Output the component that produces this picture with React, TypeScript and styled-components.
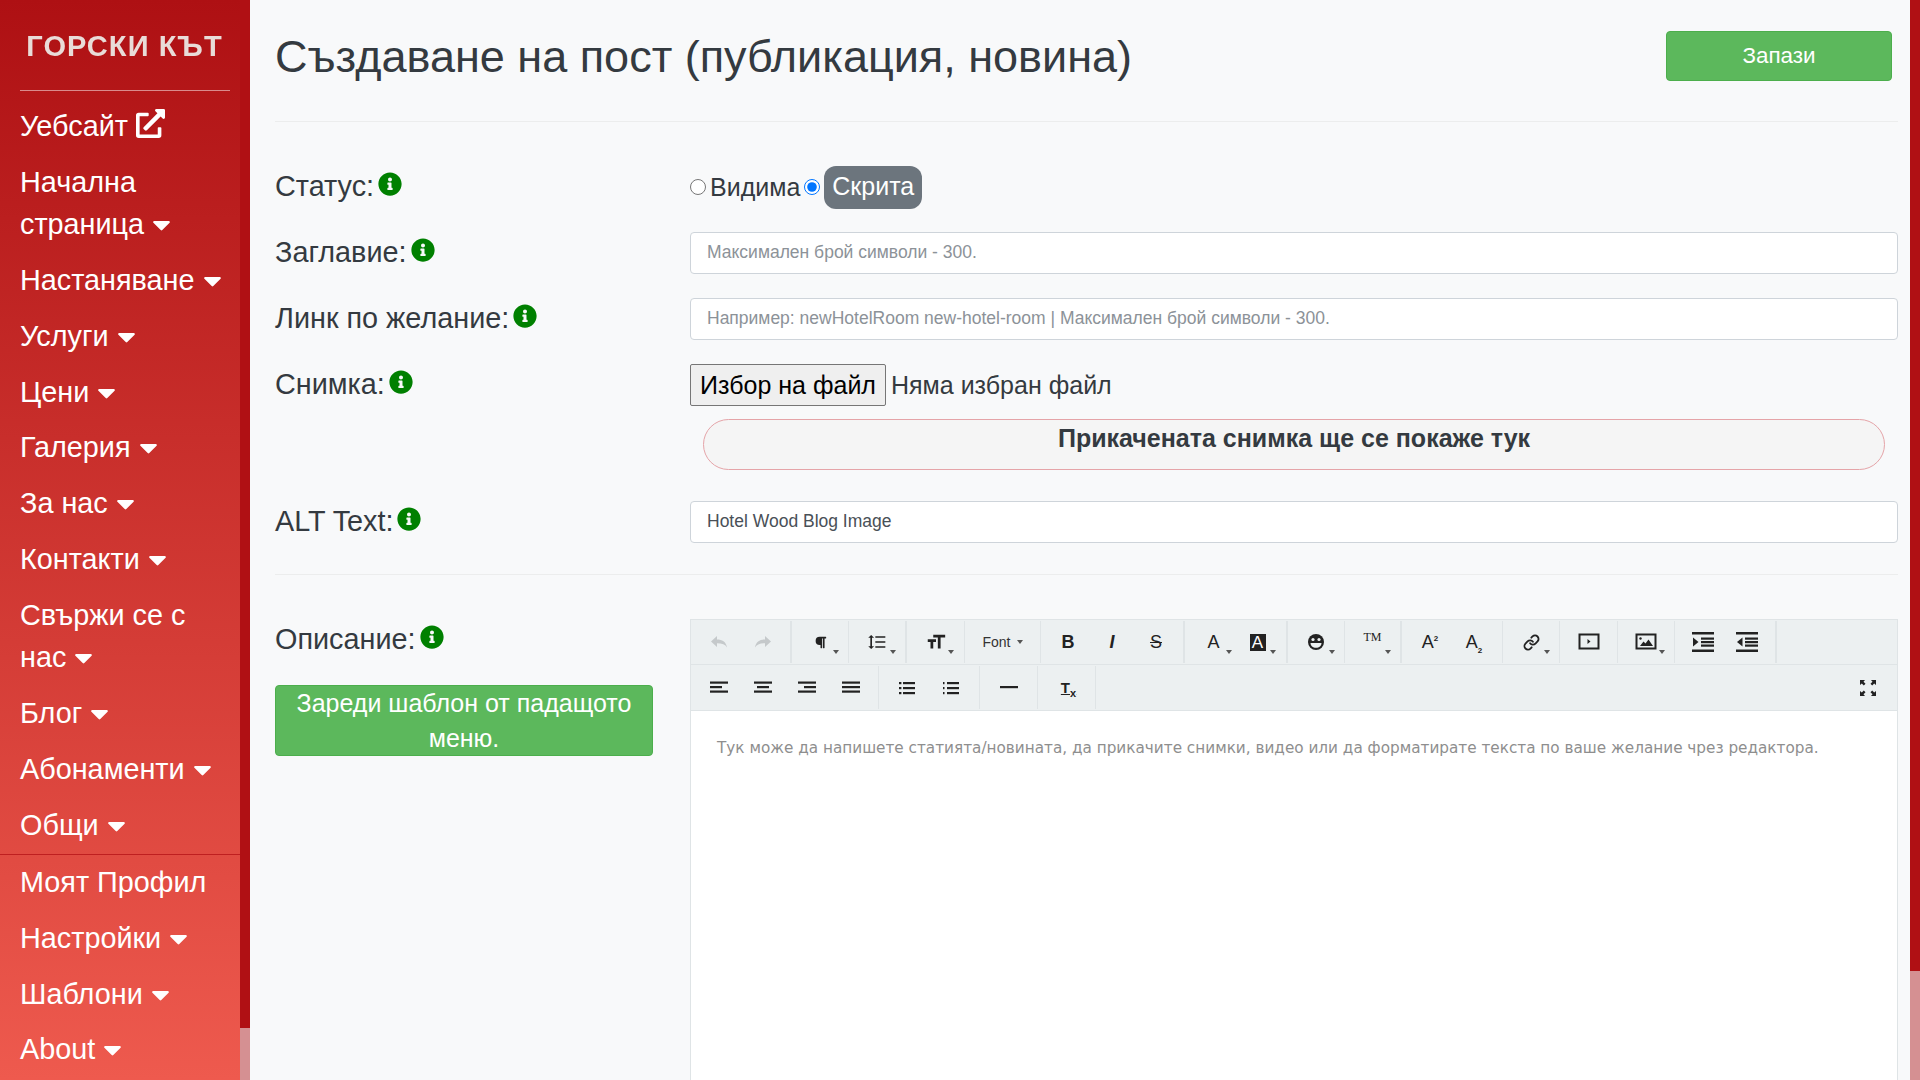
import React from "react"
import styled, { createGlobalStyle } from "styled-components"
import { FaCaretDown, FaExternalLinkAlt, FaInfoCircle, FaParagraph } from "react-icons/fa"
import { MdFormatLineSpacing, MdFormatSize } from "react-icons/md"
import { Link as LinkIcon } from "lucide-react"

const GlobalStyle = createGlobalStyle`
	html, body {
		margin: 0;
		height: 100%;
		overflow: hidden;
	}
	body {
		font-family: "Liberation Sans", Arial, sans-serif;
		color: #343a40;
	}
	* {
		box-sizing: border-box;
	}
`

const Layout = styled.div`
	display: flex;
	height: 100vh;
	overflow: hidden;
`

const ScrollTrack = styled.div`
	width: 10px;
	flex-shrink: 0;
	height: 100vh;
	background: #d59092;
`

const ScrollThumb = styled.div<{ $h: number }>`
	height: ${(p) => p.$h}px;
	background: #b01014;
`

const Sidebar = styled.aside`
	width: 240px;
	flex-shrink: 0;
	height: 100vh;
	overflow: hidden;
	background: linear-gradient(180deg, #ae1013 0%, #ee5a4e 100%);
`

const Logo = styled.div`
	height: 90px;
	display: flex;
	align-items: center;
	justify-content: center;
	padding: 3px 0 0 9px;
	color: #e9dcd8;
	font-size: 29px;
	font-weight: 700;
	letter-spacing: 1.1px;
	white-space: nowrap;
	filter: blur(0.5px);
`

const LogoLine = styled.hr`
	margin: 0 10px 0 20px;
	border: 0;
	border-top: 1px solid rgba(255, 255, 255, 0.5);
`

const Menu = styled.nav`
	padding-top: 8px;
`

const MenuItem = styled.a`
	display: block;
	padding: 7px 10px 7px 20px;
	color: #fff;
	font-size: 28.8px;
	line-height: 41.9px;
`

const Caret = styled(FaCaretDown)`
	width: 29px;
	height: 29px;
	margin-left: -5px;
	vertical-align: -5px;
`

const ExternalIcon = styled(FaExternalLinkAlt)`
	width: 29px;
	height: 29px;
	vertical-align: -2px;
`

const MenuLine = styled.div`
	border-top: 1px solid #bf1f20;
`

const Main = styled.main`
	flex: 1;
	min-width: 0;
	height: 100vh;
	overflow: hidden;
	background: #f8f9fa;
`

const Page = styled.div`
	padding: 0 12px 0 25px;
`

const Header = styled.header`
	height: 122px;
	display: flex;
	justify-content: space-between;
	align-items: flex-start;
	border-bottom: 1px solid #eceded;
	padding: 31px 6px 0 0;
`

const Title = styled.h1`
	margin: -1px 0 0;
	font-size: 45px;
	font-weight: 400;
	line-height: 54px;
`

const SaveButton = styled.button`
	width: 226px;
	height: 50px;
	background: #5cb85c;
	border: 1px solid #4cae4c;
	border-radius: 4px;
	color: #fff;
	font-family: inherit;
	font-size: 22.4px;
`

const Form = styled.section`
	padding-top: 44px;
`

const Row = styled.div`
	display: flex;
	align-items: flex-start;
	min-height: 66px;
`

const LabelColumn = styled.div`
	width: 415px;
	flex-shrink: 0;
`

const Label = styled.label`
	display: block;
	font-size: 28.8px;
	line-height: 42px;
	margin-top: -1px;

	svg {
		color: #008000;
		font-size: 24px;
		margin-left: 4px;
		vertical-align: 0;
	}
`

const Field = styled.div`
	flex: 1;
	min-width: 0;
`

const RadioRow = styled.div`
	display: flex;
	align-items: center;
	height: 44px;
	margin-top: -1px;
	font-size: 25px;
`

const Radio = styled.input`
	margin: 0 4px 0 0;
	width: 16px;
	height: 16px;
	accent-color: #0075ff;
`

const RadioText = styled.span`
	margin-right: 4px;
`

const RadioActive = styled.span`
	background: #6c757d;
	color: #fff;
	border-radius: 12px;
	padding: 0 8px;
	height: 43px;
	line-height: 41px;
`

const TextInput = styled.input`
	display: block;
	width: 100%;
	height: 42px;
	padding: 0 16px 2px;
	background: #fff;
	border: 1px solid #ced4da;
	border-radius: 4px;
	font-family: inherit;
	font-size: 17.5px;
	color: #495057;

	&::placeholder {
		color: #8c9298;
	}
`

const FileRow = styled.div`
	display: flex;
	align-items: center;
	height: 44px;
	margin-top: -1px;
	font-size: 25px;
`

const FileButton = styled.button`
	height: 42px;
	width: 196px;
	margin-right: 5px;
	padding: 0;
	background: #efefef;
	border: 1px solid #767676;
	border-radius: 2px;
	color: #000;
	font-family: inherit;
	font-size: 25px;
`

const PreviewBox = styled.div`
	margin: 12px 13px 31px 13px;
	height: 51px;
	background: #f5f5f5;
	border: 1px solid #e5a4a8;
	border-radius: 26px;
	text-align: center;
	font-size: 25px;
	font-weight: 700;
	line-height: 36px;
`

const Divider = styled.hr`
	margin: 7px 0 44px;
	border: 0;
	border-top: 1px solid #eceded;
`

const TemplateButton = styled.button`
	display: block;
	width: 378px;
	height: 71px;
	margin-top: 25px;
	padding: 0 10px;
	background: #5cb85c;
	border: 1px solid #4cae4c;
	border-radius: 4px;
	color: #fff;
	font-family: inherit;
	font-size: 25px;
	line-height: 35px;
`

const Editor = styled.div`
	border: 1px solid #dfe4e6;
	border-bottom: 0;
	background: #fff;
	height: 580px;
`

const Toolbar = styled.div`
	background: #ecf0f1;
`

const ToolRow = styled.div<{ $h: number }>`
	display: flex;
	height: ${(p) => p.$h}px;
	border-bottom: 1px solid #dfe4e6;
`

const Group = styled.div<{ $w: number; $thick?: boolean }>`
	display: flex;
	align-items: center;
	justify-content: center;
	width: ${(p) => p.$w}px;
	margin: 1px 0;
	border-right: ${(p) => (p.$thick ? 2 : 1)}px solid #dfe4e6;
`

const Tool = styled.span<{ $off?: boolean }>`
	position: relative;
	display: flex;
	align-items: center;
	justify-content: center;
	width: 44px;
	height: 42px;
	color: ${(p) => (p.$off ? "#c5c9cb" : "#222")};
	font-size: 16px;
	line-height: 1;
`

const DropCaret = styled.i`
	position: absolute;
	right: 3.5px;
	bottom: 9px;
	border-top: 4px solid #555;
	border-left: 3.5px solid transparent;
	border-right: 3.5px solid transparent;
`

const FontTool = styled.span`
	font-size: 14px;
	color: #333;
	display: flex;
	align-items: center;
	gap: 6px;
`

const SmallCaret = styled.i`
	border-top: 4px solid #555;
	border-left: 3.5px solid transparent;
	border-right: 3.5px solid transparent;
`

const BoldText = styled.span`
	font-weight: 700;
	font-size: 18px;
`

const ItalicText = styled.span`
	font-style: italic;
	font-weight: 700;
	font-size: 18px;
`

const StrikeText = styled.span`
	text-decoration: line-through;
	font-size: 18px;
`

const ColorA = styled.span`
	font-size: 18px;
`

const InverseA = styled.span`
	display: flex;
	align-items: center;
	justify-content: center;
	width: 16px;
	height: 17px;
	background: #222;
	color: #fff;
	font-size: 17px;
`

const TrademarkText = styled.span`
	font-family: "Liberation Serif", serif;
	font-size: 12px;
	margin-top: -10px;
`

const ScriptText = styled.span`
	font-size: 18px;

	sup, sub {
		font-size: 8px;
		line-height: 0;
		font-weight: 700;
	}
`

const ClearText = styled.span`
	margin-left: 4px;
	font-size: 15px;
	font-weight: 700;
	text-decoration: underline;

	sub {
		font-size: 11px;
		line-height: 0;
	}
`

const FullscreenSlot = styled.div`
	margin-left: auto;
	width: 58px;
	display: flex;
	align-items: center;
	justify-content: center;
`

const EditorBody = styled.div`
	padding: 27px 26px;
	font-family: "DejaVu Sans", Verdana, sans-serif;
	font-size: 15.25px;
	line-height: 21px;
	color: #8e8e8e;
	white-space: nowrap;
`

const menu = [
	"Начална страница",
	"Настаняване",
	"Услуги",
	"Цени",
	"Галерия",
	"За нас",
	"Контакти",
	"Свържи се с нас",
	"Блог",
	"Абонаменти",
	"Общи",
]

const bottomMenu: { text: string; caret?: boolean }[] = [
	{ text: "Моят Профил" },
	{ text: "Настройки", caret: true },
	{ text: "Шаблони", caret: true },
	{ text: "About", caret: true },
]

const Lines: React.FC<{ rows: [number, number][] }> = ({ rows }) => (
	<svg width="18" height="18" viewBox="0 0 18 18" fill="#222">
		{rows.map(([x, w], i) => (
			<rect key={i} x={x} y={2.5 + i * 4.5} width={w} height="2.2" />
		))}
	</svg>
)

const ListIcon: React.FC<{ numbered?: boolean }> = ({ numbered }) => (
	<svg width="18" height="18" viewBox="0 0 18 18" fill="#222">
		{[3, 8, 13].map((y) => (
			<g key={y}>
				<rect x="1" y={y} width={numbered ? 1.5 : 2.4} height="2.2" />
				<rect x="5" y={y} width="12" height="2.2" />
			</g>
		))}
	</svg>
)

const IndentIcon: React.FC<{ out?: boolean }> = ({ out }) => (
	<svg width="22" height="20" viewBox="0 0 22 20" fill="#222">
		<rect x="0" y="0" width="22" height="2.5" />
		<rect x="9" y="5.5" width="13" height="2.2" />
		<rect x="9" y="9" width="13" height="2.2" />
		<rect x="9" y="12.5" width="13" height="2.2" />
		<rect x="0" y="17.5" width="22" height="2.5" />
		{out ? <path d="M6.5 5.5v9L1 10z" /> : <path d="M1 5.5v9L6.5 10z" />}
	</svg>
)

const Emoji = () => (
	<svg width="18" height="18" viewBox="0 0 18 18">
		<circle cx="9" cy="9" r="8" fill="#222" />
		<circle cx="6" cy="6.5" r="1.6" fill="#ecf0f1" />
		<circle cx="12" cy="6.5" r="1.6" fill="#ecf0f1" />
		<path d="M3.5 10h11c0 3-2.4 4.800-5.500 4.800S3.500 13 3.500 10z" fill="#ecf0f1" />
	</svg>
)

const VideoIcon = () => (
	<svg width="22" height="18" viewBox="0 0 22 18">
		<rect x="1.500" y="1.500" width="19" height="14" fill="none" stroke="#222" strokeWidth="2" />
		<path d="M9.500 6v5l3-2.500z" fill="#222" />
	</svg>
)

const ImageIcon = () => (
	<svg width="22" height="18" viewBox="0 0 22 18">
		<rect x="1.500" y="1.500" width="19" height="14" fill="none" stroke="#222" strokeWidth="2" />
		<circle cx="5.500" cy="5.500" r="1.200" fill="#222" />
		<path d="M5 13l3.500-4.500 2 2L13.500 6.500 18 13z" fill="#222" />
	</svg>
)

const FullscreenIcon = () => (
	<svg width="18" height="18" viewBox="0 0 18 18" fill="#222">
		<path d="M1 1h5L4.500 2.800 6.500 4.800 4.800 6.500 2.800 4.500 1 6z" />
		<path d="M17 1v5l-1.800-1.500-2 2-1.700-1.700 2-2L12 1z" />
		<path d="M1 17v-5l1.800 1.500 2-2 1.700 1.700-2 2L6 17z" />
		<path d="M17 17h-5l1.500-1.800-2-2 1.700-1.700 2 2L17 12z" />
	</svg>
)

const UndoIcon: React.FC<{ flip?: boolean }> = ({ flip }) => (
	<svg width="16" height="12" viewBox="0 0 16 12" fill="#c5c9cb" style={flip ? { transform: "scaleX(-1)" } : undefined}>
		<path d="M6 0v3.500c5 0 9 2 10 8-1.500-3-5-4.300-10-4.300V11L0 5.500z" />
	</svg>
)

const Info = () => <FaInfoCircle />

const DropTool: React.FC<{ children: React.ReactNode }> = ({ children }) => (
	<Tool>
		{children}
		<DropCaret />
	</Tool>
)

export default function App() {
	return (
		<Layout>
			<GlobalStyle />
			<Sidebar>
				<Logo>ГОРСКИ КЪТ</Logo>
				<LogoLine />
				<Menu>
					<MenuItem>
						Уебсайт <ExternalIcon />
					</MenuItem>
					{menu.map((text) => (
						<MenuItem key={text}>
							{text} <Caret />
						</MenuItem>
					))}
					<MenuLine />
					{bottomMenu.map((item) => (
						<MenuItem key={item.text}>
							{item.text} {item.caret && <Caret />}
						</MenuItem>
					))}
				</Menu>
			</Sidebar>
			<ScrollTrack>
				<ScrollThumb $h={1028} />
			</ScrollTrack>
			<Main>
				<Page>
					<Header>
						<Title>Създаване на пост (публикация, новина)</Title>
						<SaveButton>Запази</SaveButton>
					</Header>
					<Form>
						<Row>
							<LabelColumn>
								<Label>Статус:<Info /></Label>
							</LabelColumn>
							<Field>
								<RadioRow>
									<Radio type="radio" name="status" />
									<RadioText>Видима</RadioText>
									<Radio type="radio" name="status" defaultChecked />
									<RadioActive>Скрита</RadioActive>
								</RadioRow>
							</Field>
						</Row>
						<Row>
							<LabelColumn>
								<Label>Заглавие:<Info /></Label>
							</LabelColumn>
							<Field>
								<TextInput placeholder="Максимален брой символи - 300." />
							</Field>
						</Row>
						<Row>
							<LabelColumn>
								<Label>Линк по желание:<Info /></Label>
							</LabelColumn>
							<Field>
								<TextInput placeholder="Например: newHotelRoom new-hotel-room | Максимален брой символи - 300." />
							</Field>
						</Row>
						<Row>
							<LabelColumn>
								<Label>Снимка:<Info /></Label>
							</LabelColumn>
							<Field>
								<FileRow>
									<FileButton>Избор на файл</FileButton>
									Няма избран файл
								</FileRow>
								<PreviewBox>Прикачената снимка ще се покаже тук</PreviewBox>
							</Field>
						</Row>
						<Row>
							<LabelColumn>
								<Label>ALT Text:<Info /></Label>
							</LabelColumn>
							<Field>
								<TextInput defaultValue="Hotel Wood Blog Image" />
							</Field>
						</Row>
						<Divider />
						<Row>
							<LabelColumn>
								<Label>Описание:<Info /></Label>
								<TemplateButton>Зареди шаблон от падащото меню.</TemplateButton>
							</LabelColumn>
							<Field>
								<Editor>
									<Toolbar>
										<ToolRow $h={45}>
											<Group $w={101} $thick>
												<Tool $off><UndoIcon /></Tool>
												<Tool $off><UndoIcon flip /></Tool>
											</Group>
											<Group $w={57}><DropTool><FaParagraph size={13} /></DropTool></Group>
											<Group $w={58} $thick><DropTool><MdFormatLineSpacing size={20} /></DropTool></Group>
											<Group $w={58}><DropTool><MdFormatSize size={22} /></DropTool></Group>
											<Group $w={76}><FontTool>Font <SmallCaret /></FontTool></Group>
											<Group $w={144} $thick>
												<Tool><BoldText>B</BoldText></Tool>
												<Tool><ItalicText>I</ItalicText></Tool>
												<Tool><StrikeText>S</StrikeText></Tool>
											</Group>
											<Group $w={103} $thick>
												<DropTool><ColorA>A</ColorA></DropTool>
												<DropTool><InverseA>A</InverseA></DropTool>
											</Group>
											<Group $w={57}><DropTool><Emoji /></DropTool></Group>
											<Group $w={57} $thick><DropTool><TrademarkText>TM</TrademarkText></DropTool></Group>
											<Group $w={101}>
												<Tool><ScriptText>A<sup>2</sup></ScriptText></Tool>
												<Tool><ScriptText>A<sub>2</sub></ScriptText></Tool>
											</Group>
											<Group $w={57}><DropTool><LinkIcon size={17} strokeWidth={2.6} /></DropTool></Group>
											<Group $w={58}><Tool><VideoIcon /></Tool></Group>
											<Group $w={57}><DropTool><ImageIcon /></DropTool></Group>
											<Group $w={102} $thick>
												<Tool><IndentIcon /></Tool>
												<Tool><IndentIcon out /></Tool>
											</Group>
										</ToolRow>
										<ToolRow $h={46}>
											<Group $w={188}>
												<Tool><Lines rows={[[0, 18], [0, 12], [0, 18]]} /></Tool>
												<Tool><Lines rows={[[0, 18], [3, 12], [0, 18]]} /></Tool>
												<Tool><Lines rows={[[0, 18], [6, 12], [0, 18]]} /></Tool>
												<Tool><Lines rows={[[0, 18], [0, 18], [0, 18]]} /></Tool>
											</Group>
											<Group $w={101}>
												<Tool><ListIcon /></Tool>
												<Tool><ListIcon numbered /></Tool>
											</Group>
											<Group $w={58}><Tool><Lines rows={[[0, 0], [0, 18]]} /></Tool></Group>
											<Group $w={58}><Tool><ClearText>T<sub>x</sub></ClearText></Tool></Group>
											<FullscreenSlot><FullscreenIcon /></FullscreenSlot>
										</ToolRow>
									</Toolbar>
									<EditorBody>
										Тук може да напишете статията/новината, да прикачите снимки, видео или да форматирате текста по ваше желание чрез редактора.
									</EditorBody>
								</Editor>
							</Field>
						</Row>
					</Form>
				</Page>
			</Main>
			<ScrollTrack>
				<ScrollThumb $h={971} />
			</ScrollTrack>
		</Layout>
	)
}
